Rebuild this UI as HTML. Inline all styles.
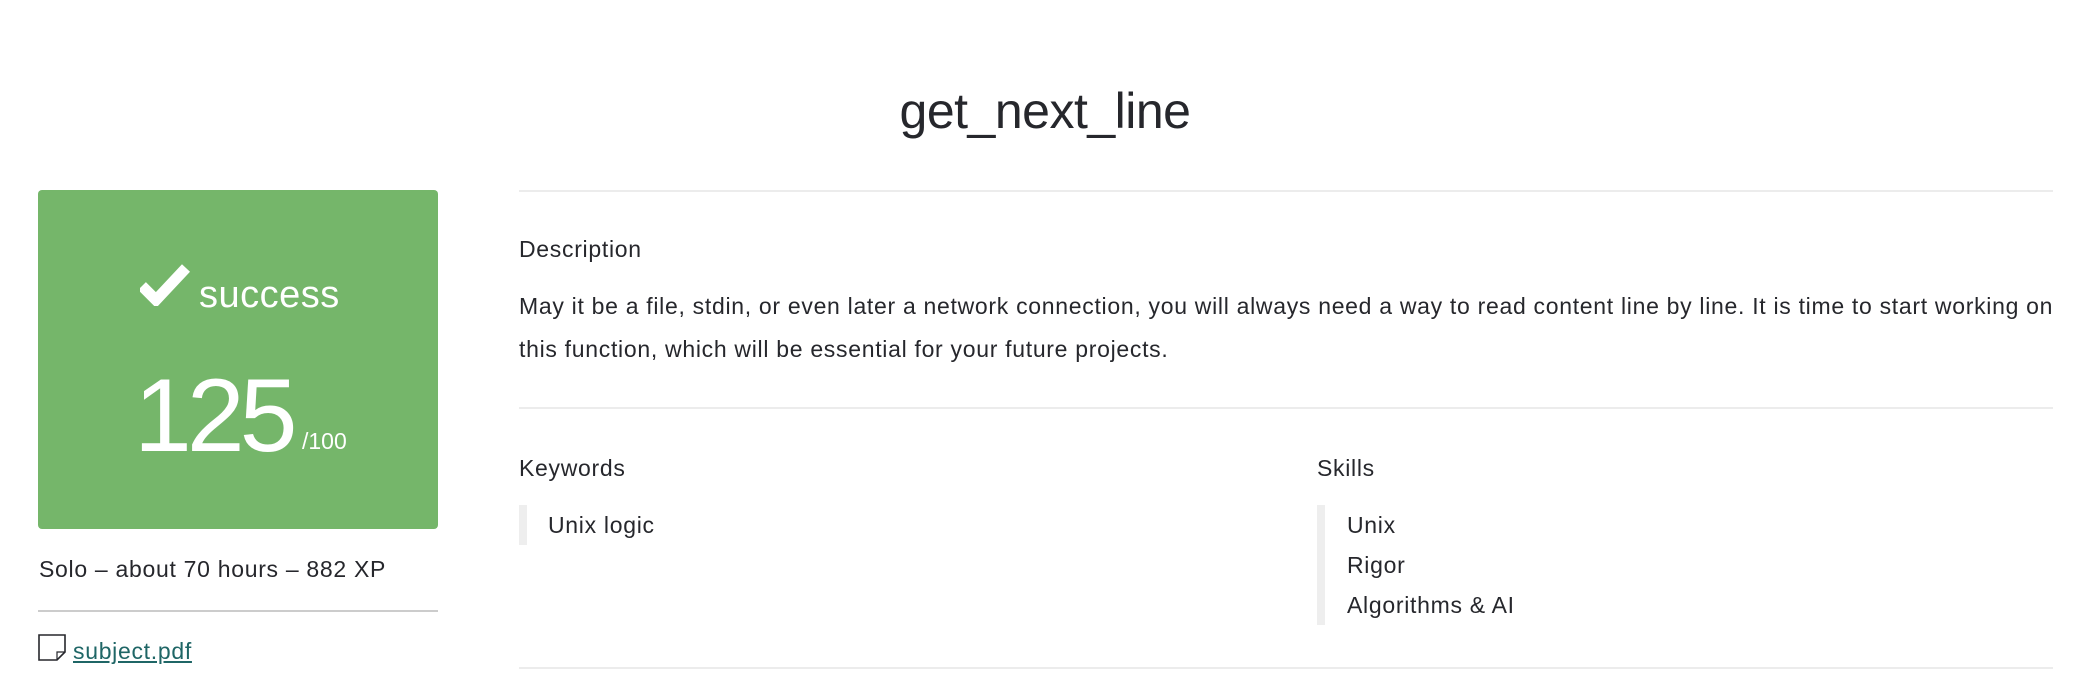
<!DOCTYPE html>
<html><head><meta charset="utf-8"><style>
*{margin:0;padding:0;box-sizing:border-box}
body{width:2090px;height:690px;background:#fff;position:relative;overflow:hidden;font-family:"Liberation Sans",sans-serif;color:#26272c}
.a{position:absolute;white-space:nowrap}
.hr{position:absolute;left:519px;width:1534px;height:2px;background:#ececec}
.t{font-size:23px;letter-spacing:0.7px}
</style></head><body>
<div class="a" style="left:0;width:2090px;text-align:center;top:82px;font-size:50px;letter-spacing:-0.5px;">get_next_line</div>

<div class="a" style="left:38px;top:190px;width:400px;height:339px;background:#75b66a;border-radius:4px"></div>
<svg class="a" style="left:140px;top:260px" width="50" height="46" viewBox="0 0 50 46"><path d="M2 26 L16 40 L46 8" fill="none" stroke="#fff" stroke-width="11" stroke-linejoin="miter"/></svg>
<div class="a" style="left:199px;top:274px;font-size:38px;color:#fff;letter-spacing:0.5px">success</div>
<div class="a" style="left:134px;top:364px;font-size:104px;color:#fff;letter-spacing:-5px;line-height:104px">125</div>
<div class="a" style="left:302px;top:428px;font-size:23px;color:#fff">/100</div>

<div class="a t" style="left:39px;top:556px">Solo – about 70 hours – 882 XP</div>
<div class="a" style="left:38px;top:610px;width:400px;height:2px;background:#cccccc"></div>
<svg class="a" style="left:38px;top:634px" width="28" height="28" viewBox="0 0 28 28"><path d="M1 1 H27 V18 L19 26 H1 Z" fill="#fff" stroke="#26272c" stroke-width="1.6"/><path d="M27 18 H19 V26" fill="none" stroke="#26272c" stroke-width="1.2"/></svg>
<div class="a t" style="left:73px;top:638px;color:#1f6666;text-decoration:underline">subject.pdf</div>

<div class="hr" style="top:190px"></div>
<div class="a t" style="left:519px;top:236px">Description</div>
<div class="a t" style="left:519px;top:285px;line-height:43px">May it be a file, stdin, or even later a network connection, you will always need a way to read content line by line. It is time to start working on<br>this function, which will be essential for your future projects.</div>
<div class="hr" style="top:407px"></div>

<div class="a t" style="left:519px;top:455px">Keywords</div>
<div class="a" style="left:519px;top:505px;width:8px;height:40px;background:#eeeeee"></div>
<div class="a t" style="left:548px;top:512px">Unix logic</div>

<div class="a t" style="left:1317px;top:455px">Skills</div>
<div class="a" style="left:1317px;top:505px;width:8px;height:120px;background:#eeeeee"></div>
<div class="a t" style="left:1347px;top:505px;line-height:40px">Unix<br>Rigor<br>Algorithms &amp; AI</div>

<div class="hr" style="top:667px"></div>
</body></html>
